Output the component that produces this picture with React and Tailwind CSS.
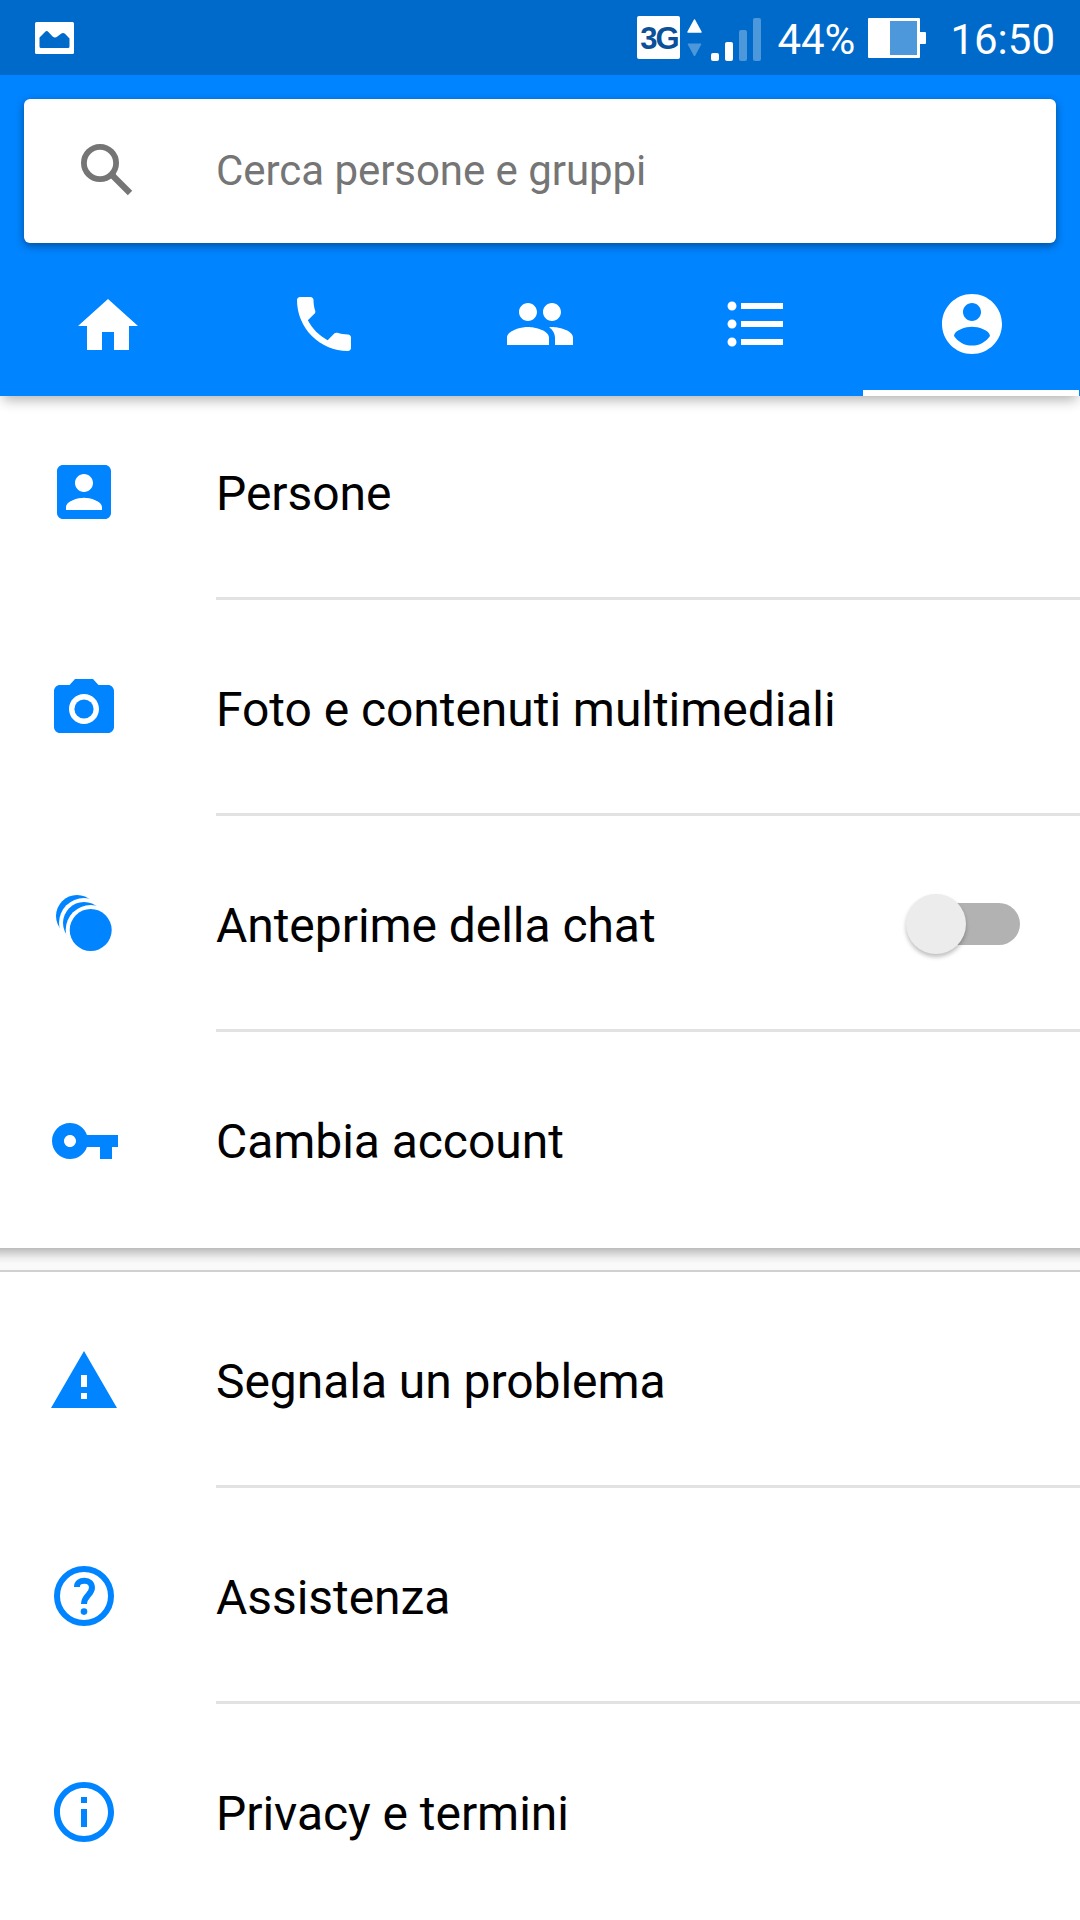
import { MdHome, MdPhone, MdPeople, MdFormatListBulleted, MdCameraAlt, MdVpnKey, MdWarning, MdInfoOutline } from 'react-icons/md'

function PictureIcon() {
  return (
    <svg className="w-[39px] h-[32px]" viewBox="0 0 39 32">
      <rect width="39" height="32" rx="1.5" fill="#fff" />
      <path d="M4.5 15.5L10 10q1.7-2 3.4 0l4.2 4.6q2.4 2 4.8 0L26 11.8q2-1.8 4 0l4.5 4.7v8q0 1.5-1.5 1.5H6q-1.5 0-1.5-1.5z" fill="#006acb" />
    </svg>
  )
}

function DataArrows() {
  return (
    <svg className="ml-[7px] w-[15px] h-[38px]" viewBox="0 0 15 38">
      <path d="M7.5 1L14 13H1z" fill="#fff" stroke="#fff" strokeWidth="1.5" strokeLinejoin="round" />
      <path d="M7.5 37L14 25H1z" fill="#4d97db" stroke="#4d97db" strokeLinejoin="round" />
    </svg>
  )
}

function SearchIcon() {
  return (
    <svg className="w-[52px] h-[52px] -mt-0.5" viewBox="0 0 52 52" fill="none" stroke="#757575">
      <circle cx="19" cy="19" r="16.1" strokeWidth="5.8" />
      <path d="M31.5 31.5L49 49" strokeWidth="6.2" />
      <path d="M30 28L34 32M29 29L33 33" strokeWidth="3" />
    </svg>
  )
}

function AccountCircleIcon({ className }) {
  return (
    <svg className={className} viewBox="0 0 24 24" fill="currentColor">
      <path d="M12 2C6.48 2 2 6.48 2 12s4.48 10 10 10 10-4.48 10-10S17.52 2 12 2zm0 3c1.66 0 3 1.34 3 3s-1.34 3-3 3-3-1.34-3-3 1.34-3 3-3zm0 14.2c-2.5 0-4.71-1.28-6-3.22.03-1.99 4-3.08 6-3.08 1.99 0 5.97 1.09 6 3.08-1.29 1.94-3.5 3.22-6 3.22z" />
    </svg>
  )
}

function AccountBoxIcon({ className }) {
  return (
    <svg className={className} viewBox="0 0 24 24" fill="currentColor">
      <path d="M3 5v14c0 1.1.89 2 2 2h14c1.1 0 2-.9 2-2V5c0-1.1-.9-2-2-2H5c-1.11 0-2 .9-2 2zm12 4c0 1.66-1.34 3-3 3s-3-1.34-3-3 1.34-3 3-3 3 1.34 3 3zm-9 8c0-2 4-3.1 6-3.1s6 1.1 6 3.1v1H6v-1z" />
    </svg>
  )
}

function ChatHeadsIcon({ className }) {
  return (
    <svg className={className} viewBox="0 0 72 72" fill="currentColor">
      <circle cx="29" cy="28" r="21" />
      <circle cx="36" cy="35" r="25" fill="#fff" />
      <circle cx="36" cy="35" r="21" />
      <circle cx="42.7" cy="42" r="25" fill="#fff" />
      <circle cx="42.7" cy="42" r="21" />
    </svg>
  )
}

function HelpIcon({ className }) {
  return (
    <svg className={className} viewBox="0 0 24 24" fill="none" stroke="currentColor" strokeWidth="2">
      <circle cx="12" cy="12" r="9" />
      <path d="M9.65 9C9.65 7.6 10.6 6.9 12.2 6.9c1.5 0 2.45.9 2.45 2.35C14.65 11.6 12 11.8 12 14.7" />
      <circle cx="12" cy="17.2" r="1.1" fill="currentColor" stroke="none" />
    </svg>
  )
}

const tabs = [
  { id: 'home', icon: MdHome, className: 'mt-1' },
  { id: 'calls', icon: MdPhone },
  { id: 'groups', icon: MdPeople },
  { id: 'list', icon: MdFormatListBulleted },
  { id: 'profile', icon: AccountCircleIcon, active: true },
]

const accountItems = [
  { title: 'Persone', icon: AccountBoxIcon },
  { title: 'Foto e contenuti multimediali', icon: MdCameraAlt, className: 'mt-0.5' },
  { title: 'Anteprime della chat', icon: ChatHeadsIcon, toggle: true },
  { title: 'Cambia account', icon: MdVpnKey, className: 'mt-0.5 ml-px -mr-px' },
]

const supportItems = [
  { title: 'Segnala un problema', icon: MdWarning, className: 'mt-0.5' },
  { title: 'Assistenza', icon: HelpIcon },
  { title: 'Privacy e termini', icon: MdInfoOutline },
]

function StatusBar() {
  return (
    <div className="h-[75px] bg-[#006acb] flex items-center justify-between pl-[34.5px] pr-[25px]">
      <PictureIcon />
      <div className="flex items-center text-white text-[42px] leading-none">
        <div className="w-[43px] h-[43px] pt-0.5 rounded-xs bg-white flex items-center justify-center text-[#0b5098] text-[31px] font-bold tracking-[-2px] font-['Liberation_Sans']">
          3G
        </div>
        <DataArrows />
        <div className="ml-[9px] mt-1 h-[43px] flex items-end gap-1.5">
          <div className="w-2 h-2 rounded-xs bg-white" />
          <div className="w-2 h-[19px] rounded-xs bg-white" />
          <div className="w-2 h-[31px] rounded-xs bg-[#4d97db]" />
          <div className="w-2 h-[43px] rounded-xs bg-[#4d97db]" />
        </div>
        <span className="ml-4 w-[79px] mt-1 whitespace-nowrap">44%</span>
        <div className="ml-3 flex items-center">
          <div className="w-[52px] h-[40px] rounded-[1px] bg-white py-[3px] pl-[22px] pr-[3px]">
            <div className="h-full bg-[#4d97db]" />
          </div>
          <div className="w-1.5 h-3 bg-white rounded-r-[1px]" />
        </div>
        <span className="ml-6 mt-1">16:50</span>
      </div>
    </div>
  )
}

function Switch() {
  return (
    <div className="relative w-[114px] h-[60px] mr-[60px] flex items-center">
      <div className="ml-[3px] w-full h-[42px] rounded-full bg-[#b2b2b2]" />
      <div className="absolute left-0 top-0 w-[60px] h-[60px] rounded-full bg-[#ececec] shadow-[0_3px_4px_rgba(0,0,0,0.25)]" />
    </div>
  )
}

function Row({ item, last }) {
  return (
    <div className="h-[216px] flex items-center pl-12">
      <item.icon className={`w-[72px] h-[72px] shrink-0 text-[#0084ff] ${item.className || ''}`} />
      <div className={`ml-24 flex-1 h-full flex items-center justify-between border-[#e2e2e2] ${last ? '' : 'border-b-3 pt-[3px]'}`}>
        <span className="text-5xl text-black pt-[3px] tracking-[-0.05px]">{item.title}</span>
        {item.toggle && <Switch />}
      </div>
    </div>
  )
}

export default function App() {
  return (
    <div className="w-[1080px] h-[1920px] overflow-hidden bg-white font-[Roboto,sans-serif]">
      <header className="relative z-10 h-[396px] bg-[#0084ff] shadow-[0_7px_12px_-3px_rgba(0,0,0,0.3)] flex flex-col">
        <StatusBar />
        <div className="mx-6 mt-6 h-[144px] shrink-0 bg-white rounded-md shadow-[0_3px_9px_rgba(0,0,0,0.4)] flex items-center pl-[57px]">
          <SearchIcon />
          <span className="ml-[83px] -mt-0.5 text-[42px] text-[#757575] tracking-[-0.05px]">Cerca persone e gruppi</span>
        </div>
        <nav className="flex-1 grid grid-cols-5 mr-px">
          {tabs.map((tab) => (
            <div
              key={tab.id}
              className={`flex items-center justify-center pt-[15px] pl-px border-b-6 ${tab.active ? 'border-white' : 'border-transparent'}`}
            >
              <tab.icon className={`w-[72px] h-[72px] text-white ${tab.className || ''}`} />
            </div>
          ))}
        </nav>
      </header>

      {/* First row starts slightly under the header */}
      <section className="-mt-3">
        {accountItems.map((item, i) => (
          <Row key={item.title} item={item} last={i === accountItems.length - 1} />
        ))}
      </section>

      <div className="h-6 border-b-2 border-[#d0d0d0] bg-linear-to-b from-[#bcbcbc] via-[#ededed] via-45% to-[#fafafa] to-70%" />

      <section>
        {supportItems.map((item, i) => (
          <Row key={item.title} item={item} last={i === supportItems.length - 1} />
        ))}
      </section>
    </div>
  )
}
